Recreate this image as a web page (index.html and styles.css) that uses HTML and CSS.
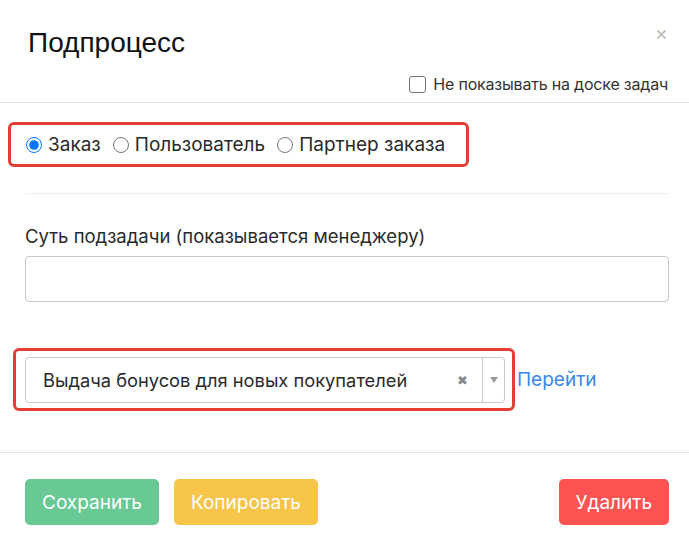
FILE: index.html
```html
<!DOCTYPE html>
<html lang="ru">
<head>
    <meta charset="UTF-8">
    <meta name="viewport" content="width=device-width, initial-scale=1.0">
    <title>Подпроцесс</title>
    <link rel="stylesheet" href="styles.css">
</head>
<body>

    <div class="modal">
        <!-- шапка -->
        <div class="modal-header">
            <h1 class="modal-title">Подпроцесс</h1>
            <span class="close">&times;</span>
            <label class="hide-board">
                <input type="checkbox">
                <span>Не показывать на доске задач</span>
            </label>
        </div>

        <div class="modal-body">
            <div class="highlight radio-box">
                <label class="radio"><input type="radio" name="target" checked> Заказ</label>
                <label class="radio"><input type="radio" name="target"> Пользователь</label>
                <label class="radio"><input type="radio" name="target"> Партнер заказа</label>
            </div>

            <div class="divider"></div>

            <div class="field">
                <label class="field-label">Суть подзадачи (показывается менеджеру)</label>
                <input type="text" class="text-input">
            </div>

            <div class="process-row">
                <div class="highlight select-box">
                    <div class="select">
                        <span class="select-value">Выдача бонусов для новых покупателей</span>
                        <span class="select-clear">&#10006;</span>
                        <span class="select-arrow"><span class="caret"></span></span>
                    </div>
                </div>
                <a href="#" class="go-link">Перейти</a>
            </div>
        </div>

        <!-- кнопки -->
        <div class="modal-footer">
            <button class="btn btn-save">Сохранить</button>
            <button class="btn btn-copy">Копировать</button>
            <button class="btn btn-delete">Удалить</button>
        </div>
    </div>

</body>
</html>
```

FILE: styles.css
```css
body {
    margin: 0;
    padding: 0;
    background-color: #fff;
    color: #2a2a2a;
    font-family: Inter, "Noto Sans", sans-serif;
}
.modal {
    width: 689px;
    height: 544px;
}
.modal-header {
    position: relative;
    padding: 26px 21px 8px 28px;
    border-bottom: 1px solid #e5e5e5;
}
.modal-title {
    margin: 0;
    font-family: "Liberation Sans", Arial, sans-serif;
    font-size: 28px;
    font-weight: 400;
    color: #111;
    line-height: 34px;
}
.close {
    position: absolute;
    top: 21px;
    right: 21px;
    font-size: 20px;
    color: #bbb;
}
.hide-board {
    display: flex;
    align-items: center;
    justify-content: flex-end;
    margin-top: 14px;
    font-size: 16px;
    letter-spacing: -0.2px;
    color: #333;
}
.hide-board input {
    appearance: none;
    -webkit-appearance: none;
    box-sizing: border-box;
    width: 17px;
    height: 17px;
    margin: 0 7px 0 0;
    border: 1.5px solid #777;
    border-radius: 3px;
}
.modal-body {
    padding: 19px 20px 41px 25px;
    border-bottom: 1px solid #e5e5e5;
}
.highlight {
    border: 3px solid #e33d36;
    border-radius: 6px;
}
.radio-box {
    display: inline-flex;
    align-items: center;
    gap: 12px;
    margin-left: -17px;
    padding: 8px 21px 8px 15px;
    font-size: 19px;
    line-height: 23px;
}
.radio {
    display: flex;
    align-items: center;
}
.radio input {
    width: 16px;
    height: 16px;
    margin: 0 6px 0 0;
}
.divider {
    height: 1px;
    background-color: #eee;
    margin: 26px 0 31px 0;
}
.field-label {
    display: block;
    font-size: 18.5px;
    line-height: 22px;
    margin-bottom: 9px;
}
.text-input {
    display: block;
    box-sizing: border-box;
    width: 100%;
    height: 46px;
    border: 1px solid #c8c8d0;
    border-radius: 4px;
}
.process-row {
    display: flex;
    align-items: center;
    margin-top: 46px;
    margin-left: -12px;
}
.select-box {
    padding: 6px 7px 5px 9px;
}
.select {
    display: flex;
    align-items: center;
    width: 480px;
    height: 46px;
    box-sizing: border-box;
    border: 1px solid #c8c8d0;
    border-radius: 4px;
}
.select-value {
    flex: 1;
    padding-left: 17px;
    font-size: 18.3px;
}
.select-clear {
    font-size: 13px;
    color: #888;
    margin-right: 14px;
}
.select-arrow {
    display: flex;
    align-items: center;
    justify-content: center;
    width: 21px;
    height: 100%;
    border-left: 1px solid #ccc;
}
.caret {
    border-left: 4px solid transparent;
    border-right: 4px solid transparent;
    border-top: 6px solid #999;
}
.go-link {
    margin-left: 2px;
    font-size: 19px;
    color: #3b86e6;
    text-decoration: none;
}
.modal-footer {
    display: flex;
    gap: 15px;
    padding: 26px 20px 0 25px;
}
.btn {
    height: 46px;
    padding: 0 17px;
    border: none;
    border-radius: 5px;
    font-family: inherit;
    font-size: 19px;
    color: #fff;
}
.btn-save {
    background-color: #68c994;
}
.btn-copy {
    background-color: #f6c549;
}
.btn-delete {
    margin-left: auto;
    background-color: #fe5353;
}
```
